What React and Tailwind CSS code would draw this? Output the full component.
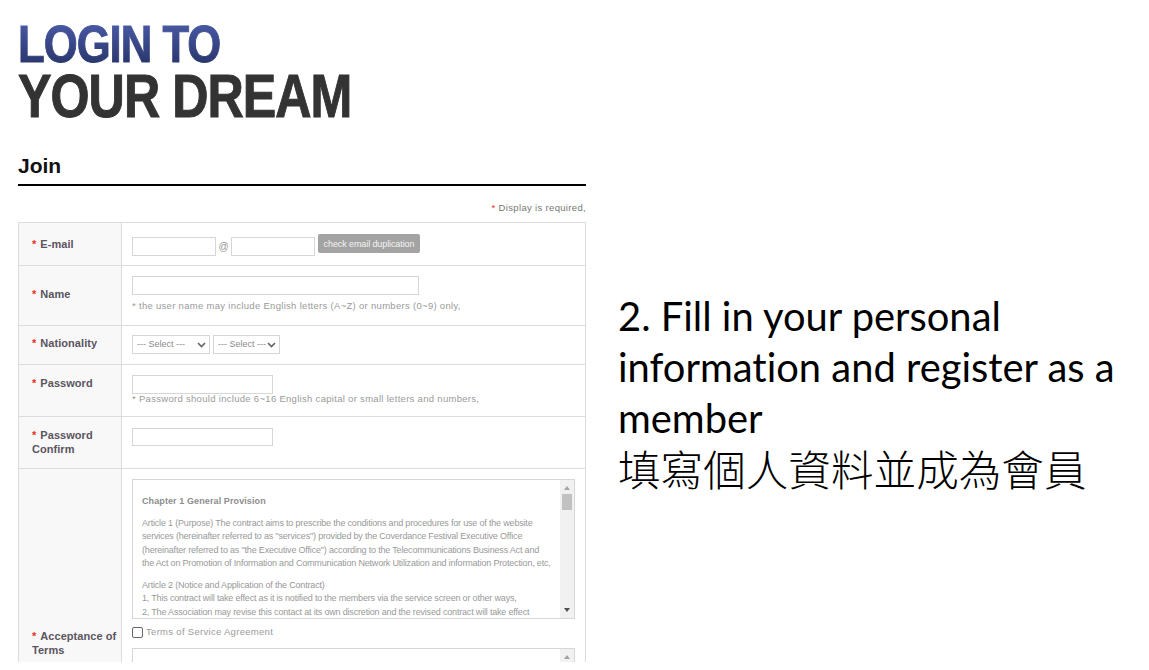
const Star = () => <span className="text-[#e8321e] mr-[4px]">*</span>;

const inputCls = "block h-[18px] border border-[#d6d6d6] bg-white";

const Label = ({ children, className = "" }) => (
  <div className={`w-[103px] shrink-0 bg-[#f8f8f8] border-r border-[#dcdcdc] pl-[13px] text-[11px] leading-[14px] font-bold tracking-[0.05px] text-[#5b5560] ${className}`}>
    {children}
  </div>
);

const Hint = ({ children, className = "" }) => (
  <p className={`text-[9.5px] leading-[12px] tracking-[0.3px] text-[#9a9a9a] ${className}`}>{children}</p>
);

const Select = ({ className }) => (
  <div className={`h-[19px] border border-[#d6d6d6] pl-[4px] pr-[3px] flex items-center justify-between text-[9px] text-[#8c8c8c] ${className}`}>
    <span>--- Select ---</span>
    <svg width="9" height="6" viewBox="0 0 9 6" fill="none" stroke="#666" strokeWidth="1.7"><path d="M1 1l3.5 3.5L8 1" /></svg>
  </div>
);

const Scrollbar = ({ thumb }) => (
  <div className="w-[14px] shrink-0 bg-[#f1f1f1] flex flex-col items-center justify-between pt-[6px] pb-[6px]">
    <div className="flex flex-col items-center">
      <div className="w-0 h-0 border-x-[3px] border-x-transparent border-b-[4px] border-b-[#a3a3a3]" />
      {thumb && <div className="w-[10px] h-[16px] bg-[#c1c1c1] mt-[4px]" />}
    </div>
    {thumb && <div className="w-0 h-0 border-x-[3px] border-x-transparent border-t-[4px] border-t-[#505050]" />}
  </div>
);

const App = () => {
  return (
    <div className="w-[1149px] h-[670px] overflow-hidden bg-white flex font-['Liberation_Sans',sans-serif]">
      <div className="w-[568px] h-[662px] overflow-hidden ml-[18px] shrink-0">
        {/* logo */}
        <div className="pt-[22px] font-bold">
          <div className="text-[52px] leading-[44px] tracking-[-1.2px] h-[44px] scale-x-[0.84] origin-left bg-linear-to-b from-[#4a5aa6] to-[#28356b] bg-clip-text text-transparent [-webkit-text-stroke:1px_transparent] w-fit whitespace-nowrap">LOGIN TO</div>
          <div className="text-[62px] leading-[60px] tracking-[-1.2px] scale-x-[0.81] origin-left text-[#333333] [-webkit-text-stroke:1px_#333333] w-fit whitespace-nowrap">YOUR DREAM</div>
        </div>

        <h2 className="mt-[28px] text-[21px] leading-[24px] font-bold text-[#111] pb-[6px] border-b-2 border-black">Join</h2>

        <p className="mt-[16px] text-right text-[9.5px] leading-[12px] tracking-[0.33px] text-[#777]"><span className="text-[#e8321e]">*</span> Display is required,</p>

        <div className="mt-[8px] border border-[#dcdcdc]">
          <div className="flex h-[43px] border-b border-[#dcdcdc]">
            <Label className="pt-[14px]"><Star />E-mail</Label>
            <div className="flex items-start pl-[10px] pt-[14px] text-[10px] text-[#999]">
              <div className={`${inputCls} w-[84px] h-[19px]`} />
              <span className="w-[15px] text-center leading-[19px]">@</span>
              <div className={`${inputCls} w-[84px] h-[19px]`} />
              <button className="ml-[3px] -mt-[3px] w-[102px] h-[19px] bg-[#a3a3a3] rounded-[2px] text-[#f4f4f4] text-[9px] leading-[21px] tracking-[-0.1px] text-center">check email duplication</button>
            </div>
          </div>
          <div className="flex h-[60px] border-b border-[#dcdcdc]">
            <Label className="pt-[21px]"><Star />Name</Label>
            <div className="pl-[10px] pt-[10px]">
              <div className={`${inputCls} w-[287px] h-[19px]`} />
              <Hint className="mt-[5px]">* the user name may include English letters (A~Z) or numbers (0~9) only,</Hint>
            </div>
          </div>
          <div className="flex h-[39px] border-b border-[#dcdcdc]">
            <Label className="pt-[10px]"><Star />Nationality</Label>
            <div className="flex pl-[10px] pt-[9px] gap-[3px]">
              <Select className="w-[78px]" />
              <Select className="w-[67px]" />
            </div>
          </div>
          <div className="flex h-[52px] border-b border-[#dcdcdc]">
            <Label className="pt-[11px]"><Star />Password</Label>
            <div className="pl-[10px] pt-[10px]">
              <div className={`${inputCls} w-[141px] h-[19px]`} />
              <Hint className="-mt-[1px]">* Password should include 6~16 English capital or small letters and numbers,</Hint>
            </div>
          </div>
          <div className="flex h-[52px] border-b border-[#dcdcdc]">
            <Label className="pt-[11px]"><Star />Password Confirm</Label>
            <div className="pl-[10px] pt-[11px]">
              <div className={`${inputCls} w-[141px] h-[18px]`} />
            </div>
          </div>
          <div className="flex h-[240px]">
            <Label className="pt-[160px]"><Star />Acceptance of Terms</Label>
            <div className="pl-[10px] pt-[10px]">
              <div className="flex w-[443px] h-[140px] border border-[#d6d6d6]">
                <div className="flex-1 overflow-hidden pl-[9px] pt-[16px] text-[9px] leading-[13.5px] text-[#999] whitespace-nowrap tracking-[-0.18px]">
                  <p className="font-bold text-[#8d8d8d] tracking-[0.1px] mb-[8px] mt-[-1px]">Chapter 1 General Provision</p>
                  <p>Article 1 (Purpose) The contract aims to prescribe the conditions and procedures for use of the website</p>
                  <p>services (hereinafter referred to as "services") provided by the Coverdance Festival Executive Office</p>
                  <p>(hereinafter referred to as "the Executive Office") according to the Telecommunications Business Act and</p>
                  <p>the Act on Promotion of Information and Communication Network Utilization and information Protection, etc,</p>
                  <p className="mt-[8px]">Article 2 (Notice and Application of the Contract)</p>
                  <p>1, This contract will take effect as it is notified to the members via the service screen or other ways,</p>
                  <p>2, The Association may revise this contact at its own discretion and the revised contract will take effect</p>
                </div>
                <Scrollbar thumb />
              </div>
              <div className="flex items-center mt-[7px] h-[12px]">
                <div className="w-[11px] h-[11px] border border-[#666] rounded-[2px] mr-[3px]" />
                <Hint>Terms of Service Agreement</Hint>
              </div>
              <div className="flex w-[443px] h-[60px] mt-[10px] border border-[#d6d6d6]">
                <div className="flex-1" />
                <Scrollbar />
              </div>
            </div>
          </div>
        </div>
      </div>

      {/* slide caption */}
      <div className="ml-[32px] pt-[290px] w-[520px] font-['Lato','Noto_Sans_CJK_TC',sans-serif] text-[39.9px] leading-[51px] text-black [font-variant-ligatures:none]">
        <p>2. Fill in your personal</p>
        <p>information and register as a</p>
        <p>member</p>
        <p className="font-['Noto_Sans_CJK_TC',sans-serif] text-[42.6px] leading-[50px] font-light">填寫個人資料並成為會員</p>
      </div>
    </div>
  );
};

export default App;
